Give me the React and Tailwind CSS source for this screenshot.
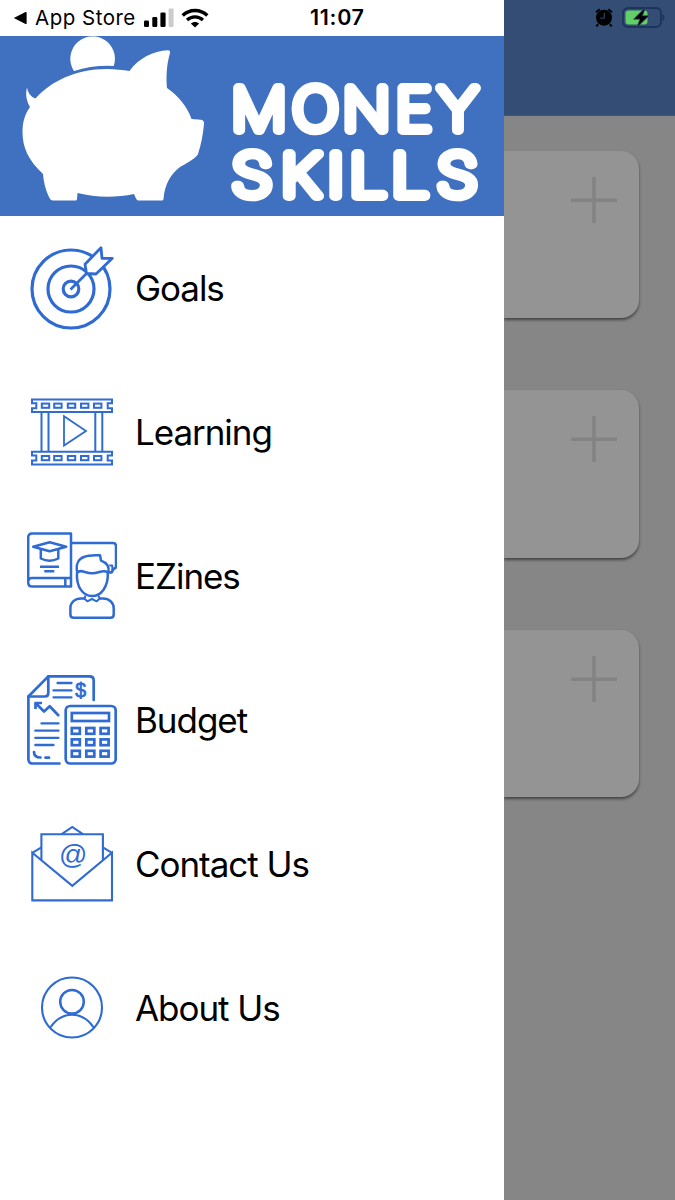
import React from 'react'

function GoalsIcon() {
  return (
    <svg width="90" height="90" viewBox="0 0 90 90" fill="none" stroke="#2f6bd3" strokeWidth="3.2">
      <circle cx="44" cy="46" r="39" />
      <circle cx="44" cy="46" r="23" />
      <circle cx="44" cy="46" r="7.8" />
      <path
        d="M59.5 30.5 58 21.3 74 4.7 75 15.3 85.3 15.3 69 31Z"
        fill="#fff"
        strokeWidth="2.8"
        strokeLinejoin="round"
      />
      <path d="M43.5 46.5 60.5 29.5" strokeWidth="2.6" />
    </svg>
  )
}

function LearningIcon() {
  const holes = [14.8, 27.2, 40.8, 54, 67]
  return (
    <svg width="90" height="90" viewBox="0 0 90 90" fill="none" stroke="#2f6bd3" strokeWidth="2">
      {[12.4, 64.8].map((y) => (
        <g key={y} transform={`translate(0 ${y})`}>
          <path d="M5 0H85V3.8H80.7V8.8H85V12.6H5V8.8H9.3V3.8H5Z" />
          {holes.map((x) => (
            <rect key={x} x={x} y="4.2" width="7.4" height="4.2" />
          ))}
        </g>
      ))}
      <path d="M14.5 25V64.8M21.5 25V64.8M68.3 25V64.8M75.3 25V64.8" />
      <path d="M37 29.3V58.6L59 43.9Z" strokeWidth="1.8" />
    </svg>
  )
}

function EzinesIcon() {
  return (
    <svg
      width="90"
      height="90"
      viewBox="0 0 90 90"
      fill="none"
      stroke="#2f6bd3"
      strokeWidth="2.5"
      strokeLinejoin="round"
    >
      {/* book */}
      <path d="M44 2.5H5Q1.2 2.5 1.2 6.5V51.5Q1.2 55.5 5 55.5H44Z" />
      <path d="M1.2 50Q1.2 47 5 47H44M38.3 47V55.5" />
      <path d="M6.2 15.7 22.7 11.3 39.2 15.7 22.7 20.2Z" />
      <path d="M13.8 18V27.5Q22.6 32 31.3 27.5V18" />
      <path d="M13 35.8H32M17.3 40.2H27.3" />
      {/* screen */}
      <path d="M44 12H86Q89 12 89 15V36.5Q86 37.5 84.5 41.5H81.5" />
      {/* person */}
      <path d="M50.3 41.5C48.5 34 51 28 57.5 25.8C62 23.6 68 24.2 73 24.2L74 29.6C79.5 31.5 82.5 35 81.5 41.5" />
      <path d="M50 41.3C49 56 56 65 65 65C74 65 81.5 56 80.8 41.3" />
      <path d="M50.3 41.8C54 37.5 58 42.5 65.3 42.3C72 42.5 76 37.8 81 41.5" />
      <path d="M82.3 34.5H85.3V41H81.5" strokeWidth="1.9" />
      <path d="M57.5 67.5H54C48 67.5 43.4 71.5 43.4 77V83.5Q43.4 86.8 46.7 86.8H83.5Q86.7 86.8 86.7 83.5V77C86.7 71.5 82 67.5 76 67.5H72.5" />
      <path d="M58.5 64.5 57.5 67.8 60.3 70.3 65 68 69.7 70.3 72.5 67.8 71.5 64.5" strokeWidth="2" />
    </svg>
  )
}

function BudgetIcon() {
  return (
    <svg
      width="90"
      height="90"
      viewBox="0 0 90 90"
      fill="none"
      stroke="#2f6bd3"
      strokeWidth="2.7"
      strokeLinecap="round"
      strokeLinejoin="round"
    >
      <path d="M32.5 88.5H6Q1.4 88.5 1.4 84V21.5L21.3 1.4H62.5Q66.7 1.4 66.7 5.5V25" />
      <path d="M21.3 1.4V18Q21.3 21.5 18 21.5H1.4" />
      <path d="M30.5 8H44.5M26.5 15.4H44.5M26.5 22.3H44.5" strokeWidth="2.3" />
      <text
        x="53.7"
        y="22"
        textAnchor="middle"
        fill="#2f6bd3"
        strokeWidth="0.8"
        fontSize="19.5"
        fontFamily="'Liberation Sans', sans-serif"
      >
        $
      </text>
      <path d="M8.5 34V28H15M8.5 28 17 36.5 22.7 31.3 32 41" strokeLinecap="butt" />
      <path d="M14.5 48.4H31.5M8.3 55.7H31.5M8.3 62.8H31.5M8.3 70H26.5" strokeWidth="2.3" />
      <path d="M7 77Q7 82.5 13.5 82.5M18.5 82.7H22" />
      <rect x="38.7" y="31" width="50" height="57.5" rx="4.5" />
      <g strokeLinejoin="miter">
        <rect x="44.8" y="38" width="37.2" height="8" />
        {[53, 64.4, 75.8].map((y) =>
          [44.8, 59.3, 73.6].map((x) => <rect key={`${x}-${y}`} x={x} y={y} width="8" height="5.8" />)
        )}
      </g>
    </svg>
  )
}

function ContactIcon() {
  return (
    <svg width="90" height="90" viewBox="0 0 90 90" fill="none" stroke="#2f6bd3" strokeWidth="2.1">
      <path d="M5.3 33.8V81.4H85V33.8L45.3 66.8Z" />
      <path d="M14.4 41V15.2H75.9V41" />
      <path d="M34.7 15.2 45.3 8 55.9 15.2M14.4 28.3 5.3 33.8M75.9 28.3 85 33.8" />
      <text
        x="45.8"
        y="45"
        textAnchor="middle"
        fill="#2f6bd3"
        stroke="none"
        fontSize="28"
        fontStyle="italic"
        fontFamily="'Liberation Sans', sans-serif"
      >
        @
      </text>
    </svg>
  )
}

function AboutIcon() {
  return (
    <svg width="90" height="90" viewBox="0 0 90 90" fill="none" stroke="#2f6bd3" strokeWidth="2.1">
      <circle cx="45" cy="44.5" r="30" />
      <circle cx="45" cy="38.7" r="11.8" strokeWidth="2.5" />
      <path d="M23.3 64.5C29 56 36 51.8 45 51.8S61 56 66.7 64.5" />
    </svg>
  )
}

const menu = [
  { label: 'Goals', Icon: GoalsIcon },
  { label: 'Learning', Icon: LearningIcon },
  { label: 'EZines', Icon: EzinesIcon },
  { label: 'Budget', Icon: BudgetIcon },
  { label: 'Contact Us', Icon: ContactIcon },
  { label: 'About Us', Icon: AboutIcon },
]

function Logo() {
  return (
    <svg className="block" width="504" height="180" viewBox="0 36 504 180" fill="#fff">
      <path d="M74 71A22.3 22.3 0 1 1 113.7 66Q93 65 74 71Z" />
      <path d="M35.5 98.5C50 82 75 69 107 69C115 69 123 70 129.5 71C139 58 153 51 168 50.3Q170.5 50.3 170 53C166.5 65 166 77 167 88C179 96 188 108 191.5 119L201 119.8Q204.5 120.5 204 124C203 135 201 145 198 154Q196.5 158 180 167C171 174 165 183 163.5 199Q163.3 200.5 162 200.5L138 200.5Q136.5 200.5 134 194C115 198 95 197.5 77.5 193L77 199Q77 200.5 75.5 200.5L53 200.5Q50.5 200.5 49 197Q44 187 43 174C28 160 22.5 147 22.5 132C22.5 122 25 114 30 107C27 102 25 95 27 87.5C28 93 31 97 35.5 98.5Z" />
      {/* thin letters with a fat round stroke, gives the rounded look */}
      <g
        fontFamily="'Inter', sans-serif"
        fontSize="58"
        fontWeight="100"
        textAnchor="middle"
        stroke="#fff"
        strokeWidth="10"
        strokeLinejoin="round"
      >
        <text transform="translate(233 130.3) scale(1.06 1)" x="24.5 77.8 125.9 170.5 212.2" y="0">
          MONEY
        </text>
        <text transform="translate(231 195.7) scale(1.14 1)" x="18.4 61.2 91.9 120.2 157.2 198.5" y="0">
          SKILLS
        </text>
      </g>
    </svg>
  )
}

function Drawer() {
  return (
    <aside className="w-[504px] h-full bg-white">
      {/* status bar, left part */}
      <div className="flex items-center h-9 pl-[13px]">
        <svg width="14" height="14" viewBox="0 0 14 14">
          <path d="M0.8 7 12.5 1Q13.6 0.6 13.6 1.8V12.2Q13.6 13.4 12.5 13Z" />
        </svg>
        <span className="w-[100px] ml-[8px] text-[20.5px] leading-none tracking-[0.5px] whitespace-nowrap">
          App Store
        </span>
        <svg className="ml-[9px]" width="30" height="20" viewBox="0 0 30 20">
          <rect x="0" y="12.5" width="5" height="6.5" rx="1.3" />
          <rect x="8.3" y="9" width="5" height="10" rx="1.3" />
          <rect x="16.4" y="4.5" width="5.2" height="14.5" rx="1.3" />
          <rect x="24.6" y="0.5" width="5" height="18.5" rx="1.3" fill="#ccc" />
        </svg>
        <svg className="ml-[7px]" width="28" height="20" viewBox="0 0 28 20" fill="none" stroke="#000">
          <path d="M1.7 7.5C8.5 0.8 19.5 0.8 26.3 7.5" strokeWidth="3.4" />
          <path d="M6 12C10.5 7.8 17.5 7.8 22 12" strokeWidth="3.2" />
          <path d="M14 19.6 9.8 15.6C12.3 13.5 15.7 13.5 18.2 15.6Z" fill="#000" stroke="none" />
        </svg>
        <span className="ml-[101px] text-[21.5px] leading-none font-semibold tracking-[0.7px]">11:07</span>
      </div>

      <div className="h-[180px] bg-[#4070c0]">
        <Logo />
      </div>

      <nav>
        {menu.map(({ label, Icon }) => (
          <a key={label} className="flex items-center gap-[18px] h-36 pl-[27px]">
            <Icon />
            <span className="text-[35px] tracking-[-1.05px] whitespace-nowrap">{label}</span>
          </a>
        ))}
      </nav>
    </aside>
  )
}

function StatusIcons() {
  return (
    <div className="flex items-center justify-end h-[35px] pr-[10px] gap-[9px]">
      <svg width="18" height="19" viewBox="0 0 18 19" fill="none">
        <circle cx="9" cy="9.7" r="8" fill="#000" />
        <path d="M1 4.3 4.7 1.2M17 4.3 13.3 1.2M3.2 16.2 1.3 18.4M14.8 16.2 16.7 18.4" stroke="#000" strokeWidth="2" />
        <path d="M9.3 5V10.2H5.2" stroke="#344d75" strokeWidth="1" />
      </svg>
      <svg width="43" height="21" viewBox="0 0 43 21" fill="none">
        <rect x="1" y="1" width="38" height="19" rx="5" stroke="#1c335b" strokeWidth="1.8" />
        <path d="M40.5 7V14Q42.5 13 42.5 10.5T40.5 7Z" fill="#1c335b" />
        <rect x="3.5" y="3.5" width="22" height="14" rx="3" fill="#61cf66" />
        <path d="M23.5 0.3 11.5 12.2H17.8L14.8 20.5 27 8.7H20.5Z" fill="#000" stroke="#344d75" strokeWidth="0.8" />
      </svg>
    </div>
  )
}

function Card() {
  return (
    <div className="flex justify-end h-[167.3px] pt-[26px] pr-[22px] rounded-r-[18px] bg-[#949494] shadow-[0_2px_3px_rgba(0,0,0,0.5)]">
      <svg width="46" height="46" viewBox="0 0 46 46" stroke="#838383" strokeWidth="3.5">
        <path d="M0 23.3H46M23 0V46" />
      </svg>
    </div>
  )
}

export default function App() {
  return (
    <div className="flex w-[675px] h-[1200px] overflow-hidden bg-[#868686] text-black font-['Inter',sans-serif]">
      <Drawer />
      <main className="flex-1 overflow-hidden">
        <header className="h-[115.5px] bg-[#344d75] border-b border-[#4a5668]">
          <StatusIcons />
        </header>
        <div className="flex flex-col gap-[72px] pt-[35.5px] pr-9">
          <Card />
          <Card />
          <Card />
        </div>
      </main>
    </div>
  )
}
